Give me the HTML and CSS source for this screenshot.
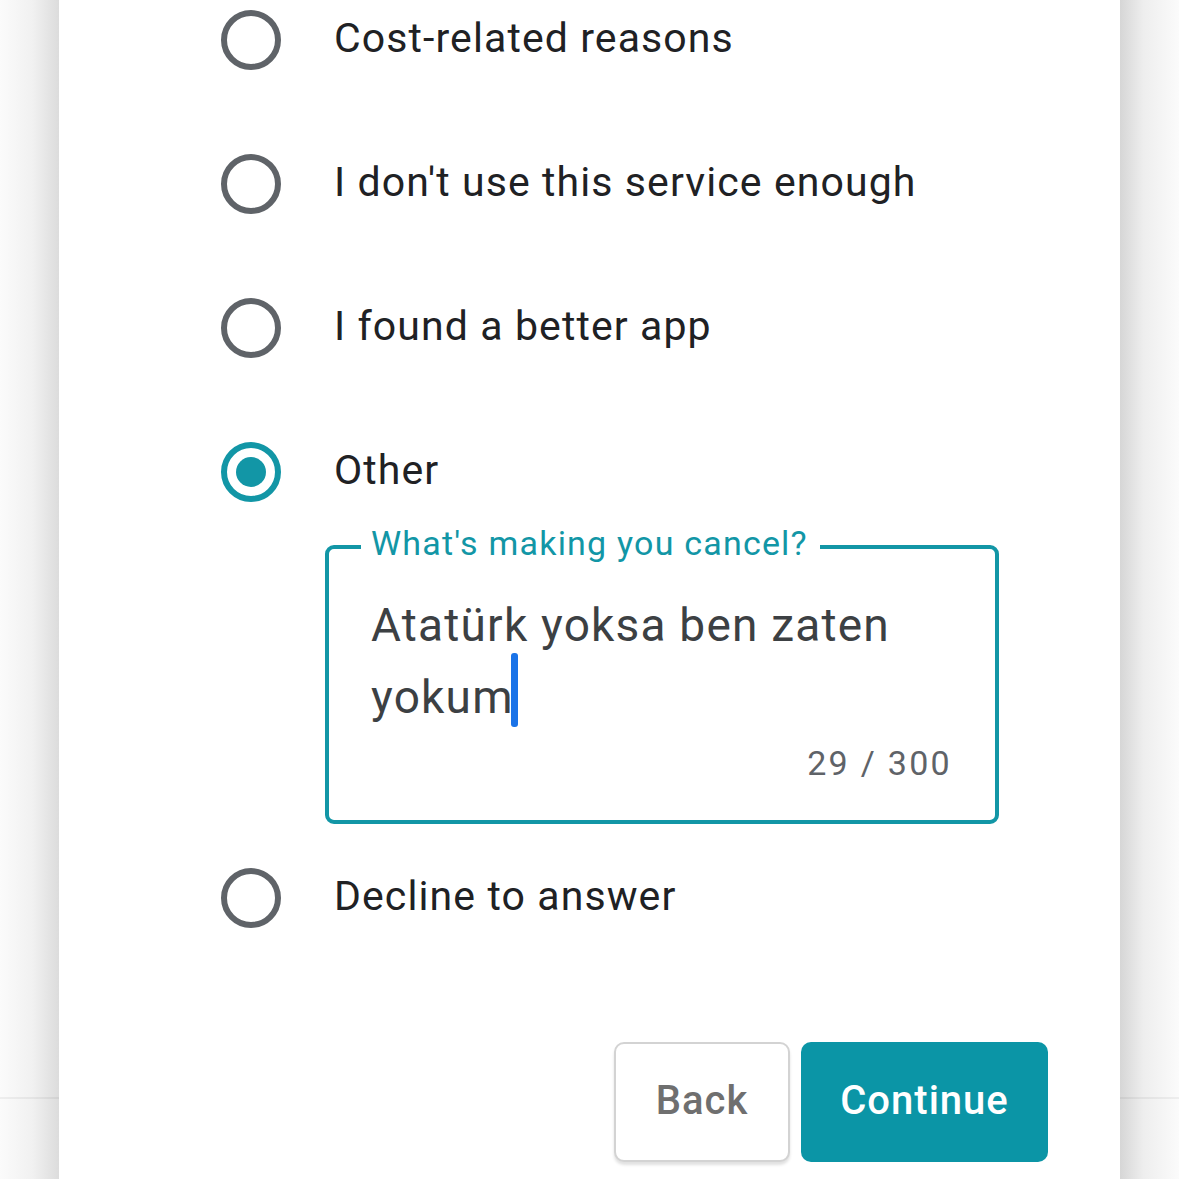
FILE: index.html
```html
<!DOCTYPE html>
<html>
<head>
<meta charset="utf-8">
<link rel="stylesheet" href="styles.css">
</head>
<body>
<div class="page">
  <div class="side side-left"><div class="side-line"></div></div>
  <main class="card">
    <div class="options">
      <div class="option">
        <span class="radio"></span>
        <span class="label">Cost-related reasons</span>
      </div>
      <div class="option">
        <span class="radio"></span>
        <span class="label">I don't use this service enough</span>
      </div>
      <div class="option">
        <span class="radio"></span>
        <span class="label">I found a better app</span>
      </div>
      <div class="option">
        <span class="radio radio-on"></span>
        <span class="label">Other</span>
      </div>
      <div class="field">
        <span class="field-label">What's making you cancel?</span>
        <div class="field-text">Atatürk yoksa ben zaten<br>yokum<span class="caret"></span></div>
        <div class="counter">29 / 300</div>
      </div>
      <div class="option option-last">
        <span class="radio"></span>
        <span class="label">Decline to answer</span>
      </div>
    </div>
    <div class="actions">
      <button class="btn btn-back">Back</button>
      <button class="btn btn-continue">Continue</button>
    </div>
  </main>
  <div class="side side-right"><div class="side-line"></div></div>
</div>
</body>
</html>
```
FILE: styles.css
```css
html, body {
  margin: 0;
  padding: 0;
  background: #ffffff;
  font-family: Roboto, "Noto Sans", Arial, sans-serif;
}
.page {
  display: grid;
  grid-template-columns: 59px 1fr 59px;
  height: 1179px;
  overflow: hidden;
}
.side {
  display: flex;
  flex-direction: column;
  padding-top: 1097px;
}
.side-left {
  background: linear-gradient(to right, #fbfbfb 0%, #f1f1f1 55%, #dcdcdc 100%);
}
.side-right {
  background: linear-gradient(to right, #d6d6d6 0%, #eeeeee 40%, #fbfbfb 100%);
}
.side-line {
  height: 2px;
  background: rgba(0, 0, 0, 0.05);
}
.card {
  background: #ffffff;
  display: flex;
  flex-direction: column;
}
.options {
  display: flex;
  flex-direction: column;
  padding-top: 10px;
  padding-left: 162px;
}
.option {
  display: flex;
  align-items: center;
  height: 60px;
  margin-bottom: 84px;
}
.option:nth-child(4) {
  margin-bottom: 43px;
}
.option-last {
  margin-bottom: 0;
}
.radio {
  box-sizing: border-box;
  width: 60px;
  height: 60px;
  border: 6.5px solid #5f6368;
  border-radius: 50%;
  display: flex;
  align-items: center;
  justify-content: center;
  flex-shrink: 0;
}
.radio-on {
  border-color: #1296a6;
}
.radio-on::after {
  content: "";
  width: 30px;
  height: 30px;
  border-radius: 50%;
  background: #1296a6;
}
.label {
  margin-left: 53px;
  padding-bottom: 4px;
  font-size: 41px;
  color: #202124;
  letter-spacing: 1.1px;
  white-space: nowrap;
}
.field {
  position: relative;
  box-sizing: border-box;
  margin-left: 104px;
  width: 674px;
  height: 279px;
  border: 4px solid #1296a6;
  border-radius: 9px;
  padding: 40px 45px 0 42px;
  margin-bottom: 44px;
}
.field-label {
  position: absolute;
  top: -28px;
  left: 32px;
  padding: 0 12px 0 10px;
  background: #ffffff;
  font-size: 34px;
  line-height: 44px;
  color: #1296a6;
  letter-spacing: 1.2px;
}
.field-text {
  font-size: 46px;
  line-height: 72px;
  height: 144px;
  color: #3c4043;
  letter-spacing: 1.2px;
}
.caret {
  display: inline-block;
  width: 7px;
  height: 74px;
  background: #1a73e8;
  border-radius: 3px;
  vertical-align: top;
  margin-top: -8px;
  margin-left: -3px;
}
.counter {
  text-align: right;
  font-size: 34px;
  line-height: 44px;
  color: #5f6368;
  letter-spacing: 2.3px;
  margin-top: 8px;
  margin-right: -2px;
}
.actions {
  display: flex;
  justify-content: flex-end;
  gap: 11px;
  padding-right: 72px;
  margin-top: 114px;
}
.btn {
  box-sizing: border-box;
  height: 120px;
  border-radius: 10px;
  font-family: Roboto, "Noto Sans", Arial, sans-serif;
  font-size: 40px;
  font-weight: 500;
  letter-spacing: 1px;
  padding: 0 0 4px 0;
  cursor: pointer;
}
.btn-back {
  width: 176px;
  background: #ffffff;
  border: 2px solid #d3d3d3;
  color: #6f6f6f;
  box-shadow: 0 3px 3px rgba(0, 0, 0, 0.12);
}
.btn-continue {
  width: 247px;
  background: #0b95a6;
  border: none;
  color: #ffffff;
}
```
